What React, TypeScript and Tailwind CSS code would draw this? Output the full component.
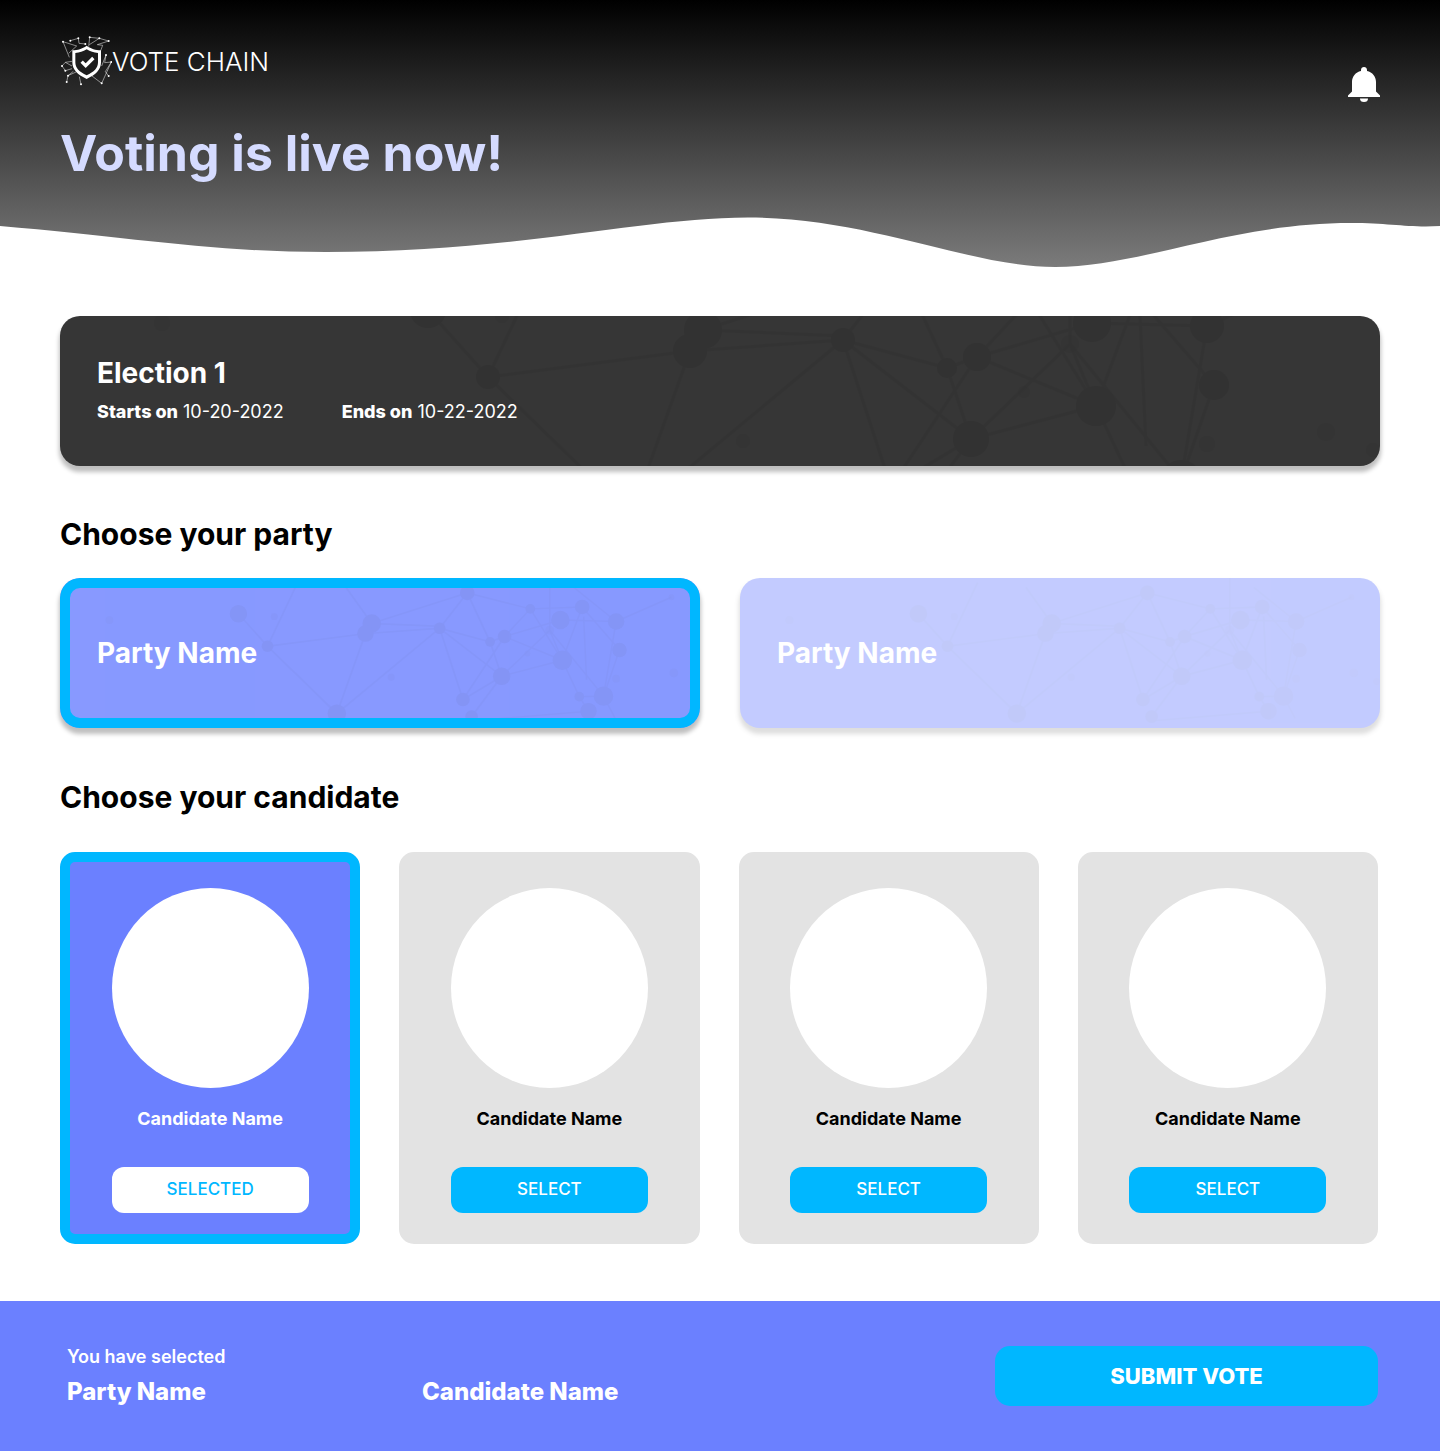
import { useState } from "react";

const NODES: [number, number, number][] = [
  [368, -6, 18], [428, 61, 12], [643, 14, 19], [630, 35, 17], [571, 200, 19],
  [783, 24, 12], [840, -49, 15], [887, 52, 10], [917, 41, 14], [970, -16, 10],
  [1032, 7, 19], [1077, -20, 15], [1010, 28, 9], [1036, 90, 20], [911, 123, 18],
  [831, 171, 14], [849, 206, 13], [1147, 10, 17], [1154, 69, 15], [1071, 165, 10],
  [1121, 164, 20], [1090, 195, 17], [1261, -40, 6], [683, 125, 7], [1147, 128, 8],
  [1266, 116, 9], [964, 76, 6], [1313, 134, 7], [102, 7, 8], [442, 0, 7],
];

const LINKS: [number, number, number, number][] = [
  [368, -6, 428, 61], [428, 61, 490, -70], [428, 61, 630, 35], [428, 61, 571, 200],
  [630, 35, 571, 200], [643, 14, 783, 20], [630, 35, 783, 24], [643, 14, 840, -49],
  [643, 14, 590, -60], [783, 24, 840, -49], [783, 24, 887, 52], [783, 24, 911, 123],
  [783, 24, 571, 200], [783, 24, 831, 171], [840, -49, 887, 52], [840, -49, 970, -16],
  [887, 52, 917, 41], [887, 52, 911, 123], [917, 41, 970, -16], [917, 41, 1032, 7],
  [917, 41, 1036, 90], [917, 41, 831, 171], [970, -16, 1036, 90], [911, 123, 1010, 28],
  [911, 123, 1036, 90], [911, 123, 849, 206], [831, 171, 911, 123], [1010, 28, 1036, 90],
  [1010, 28, 1121, 164], [1010, -80, 1010, 28], [1032, 7, 1147, 10], [970, -16, 1077, -20],
  [1077, -20, 1036, 90], [1077, -20, 1154, 69], [1080, 0, 1086, 130], [1147, 10, 1121, 164],
  [1154, 69, 1121, 164], [1036, 90, 1071, 165], [1071, 165, 1121, 164], [1071, 165, 1090, 195],
  [1147, 10, 1261, -40], [1147, 10, 1060, -60], [1090, 195, 849, 215], [1121, 164, 1145, 210],
];

function NetworkPattern({ className }: { className: string }) {
  return (
    <svg
      aria-hidden="true"
      viewBox="0 -80 1320 310"
      preserveAspectRatio="xMidYMid slice"
      className={`pointer-events-none absolute inset-0 h-full w-full ${className}`}
    >
      <g stroke="currentColor" strokeWidth="3" opacity="0.6">
        {LINKS.map(([x1, y1, x2, y2], i) => (
          <line key={i} x1={x1} y1={y1} x2={x2} y2={y2} />
        ))}
      </g>
      <g fill="currentColor">
        {NODES.map(([cx, cy, r], i) => (
          <circle key={i} cx={cx} cy={cy} r={r} opacity={r < 10 ? 0.5 : 1} />
        ))}
      </g>
    </svg>
  );
}

const LOGO_DOTS: [number, number][] = [
  [21, 35], [43, 32], [67, 25], [88, 42], [101, 22], [130, 25], [158, 33], [150, 75],
  [166, 96], [158, 138], [137, 160], [18, 108], [28, 122], [36, 137], [32, 156], [75, 163],
];

function LogoMark() {
  return (
    <svg aria-hidden="true" viewBox="12 15 156 156" className="h-[52px] w-[52px] shrink-0">
      <path
        d="M40 82 21 35 62 48 38 70M43 32 67 25 69 40 88 42M98 50 101 22 130 25 158 33 124 44 140 46 134 62M100 44 130 25M150 75 146 98 166 96 148 125 158 138M166 96 137 160 108 138M137 108 150 75M48 94 28 97 18 108 28 122 48 116M28 97 48 108M52 124 36 137 32 156M60 126 36 137M70 140 75 163"
        fill="none"
        stroke="#fff"
        strokeWidth="2"
        opacity="0.75"
      />
      <g fill="#fff">
        {LOGO_DOTS.map(([cx, cy], i) => (
          <circle key={i} cx={cx} cy={cy} r="3" />
        ))}
      </g>
      <path d="M92 47c14 10 26 13 43 14v36c0 23-17 38-43 50-26-12-43-27-43-50V61c17-1 29-4 43-14z" fill="#fff" />
      <path d="M92 58c11 7 21 10 34 11v28c0 17-12 29-34 39-22-10-34-22-34-39V69c13-1 23-4 34-11z" fill="#1d1d1d" />
      <path d="m77 95 12 12 23-23" fill="none" stroke="#fff" strokeWidth="10" />
    </svg>
  );
}

function BellIcon() {
  return (
    <svg aria-hidden="true" viewBox="0 0 32 36" fill="#fff" className="h-9 w-8">
      <path d="M16 0c-1.700 0-3 1.300-3 3v1C7.500 5.200 4 9.500 4 15v9.500L0 28.500V30h32v-1.500l-4-4V15c0-5.500-3.500-9.800-9-11V3c0-1.700-1.300-3-3-3z" />
      <path d="M12 31.500h8a4 3.500 0 0 1-8 0z" />
    </svg>
  );
}

function PartyCard({ name, selected, onSelect }: { name: string; selected: boolean; onSelect: () => void }) {
  return (
    <button
      type="button"
      aria-pressed={selected}
      onClick={onSelect}
      className={`relative flex h-[150px] items-center overflow-hidden rounded-[20px] bg-[#8899ff] px-[37px] text-left shadow-[0_5px_4px_1px_rgba(0,0,0,0.25)] ${selected ? "" : "opacity-50"}`}
    >
      <NetworkPattern className="text-[#7f8ee8] opacity-40" />
      {selected && <span className="absolute inset-0 rounded-[20px] border-[10px] border-[#00b7ff]" />}
      <span className="relative text-[28px] font-bold text-white">{name}</span>
    </button>
  );
}

function CandidateCard({ name, selected, onSelect }: { name: string; selected: boolean; onSelect: () => void }) {
  return (
    <li
      className={`flex flex-col items-center rounded-[15px] border-[10px] px-4 pt-[26px] pb-[21px] ${
        selected ? "border-[#00b7ff] bg-[#6b80ff] text-white" : "border-[#e3e3e3] bg-[#e3e3e3] text-black"
      }`}
    >
      <div className="h-[200px] w-[197px] rounded-[50%] bg-white" />
      <h3 className="mt-[19px] text-[18px] leading-6 font-bold">{name}</h3>
      <button
        type="button"
        aria-pressed={selected}
        onClick={onSelect}
        className={`mt-9 h-[46px] w-[197px] rounded-xl text-[17px] font-medium ${
          selected ? "bg-white text-[#00b7ff]" : "bg-[#00b7ff] text-white"
        }`}
      >
        {selected ? "SELECTED" : "SELECT"}
      </button>
    </li>
  );
}

export default function App() {
  const [party, setParty] = useState(0);
  const [candidate, setCandidate] = useState(0);
  const parties = ["Party Name", "Party Name"];
  const candidates = ["Candidate Name", "Candidate Name", "Candidate Name", "Candidate Name"];

  return (
    <div className="bg-white font-['Inter',sans-serif] text-black">
      <header className="relative h-[267px] px-[60px] pt-[35px]">
        <svg aria-hidden="true" viewBox="0 0 1440 267" preserveAspectRatio="none" className="absolute inset-0 h-full w-full">
          <defs>
            <linearGradient id="sky" x1="0" y1="0" x2="0" y2="1">
              <stop offset="0" stopColor="#000" />
              <stop offset="1" stopColor="#7b7b7b" />
            </linearGradient>
          </defs>
          <path
            d="M0 0H1440V226C1410 228 1390 223 1351 223C1230 223 1140 267 1055 267C970 267 870 217.500 748 217.500C640 217.500 520 252 326 252C210 252 130 237 0 226Z"
            fill="url(#sky)"
          />
        </svg>
        <div className="relative flex items-start justify-between">
          <div>
            <div className="flex items-center text-[26px] font-light text-white">
              <LogoMark />
              <span>VOTE CHAIN</span>
            </div>
            <h1 className="mt-9 text-[50px] leading-[60px] font-bold text-[#d5dbff]">Voting is live now!</h1>
          </div>
          <button type="button" aria-label="Notifications" className="mt-8">
            <BellIcon />
          </button>
        </div>
      </header>

      <main className="px-[60px] pt-[49px] pb-[57px]">
        <section className="relative h-[150px] overflow-hidden rounded-[20px] bg-[#363636] px-[37px] pt-10 text-white shadow-[0_5px_4px_1px_rgba(0,0,0,0.25)]">
          <NetworkPattern className="text-black opacity-[0.07]" />
          <div className="relative">
            <h2 className="text-[28px] leading-[34px] font-bold">Election 1</h2>
            <div className="mt-2.5 flex gap-[58px] text-[18px] leading-6">
              <p><b className="font-extrabold">Starts on</b> 10-20-2022</p>
              <p><b className="font-extrabold">Ends on</b> 10-22-2022</p>
            </div>
          </div>
        </section>

        <h2 className="mt-12 text-[30px] leading-10 font-bold">Choose your party</h2>
        <div className="mt-6 grid grid-cols-2 gap-10">
          {parties.map((name, i) => (
            <PartyCard key={i} name={name} selected={i === party} onSelect={() => setParty(i)} />
          ))}
        </div>

        <h2 className="mt-[49px] text-[30px] leading-10 font-bold">Choose your candidate</h2>
        <ul className="mt-[35px] grid grid-cols-4 gap-[39px] pr-0.5">
          {candidates.map((name, i) => (
            <CandidateCard key={i} name={name} selected={i === candidate} onSelect={() => setCandidate(i)} />
          ))}
        </ul>
      </main>

      <footer className="flex h-[150px] items-center justify-between bg-[#6b80ff] pr-[62px] pl-[67px] text-white">
        <div className="grid grid-cols-[355px_auto]">
          <p className="col-span-2 text-[18px] leading-6 font-semibold">You have selected</p>
          <p className="mt-[7px] text-[24px] leading-8 font-extrabold">{parties[party]}</p>
          <p className="mt-[7px] text-[24px] leading-8 font-extrabold">{candidates[candidate]}</p>
        </div>
        <button type="button" className="h-[60px] w-[383px] rounded-[15px] bg-[#00b7ff] text-[22px] font-extrabold">
          SUBMIT VOTE
        </button>
      </footer>
    </div>
  );
}
